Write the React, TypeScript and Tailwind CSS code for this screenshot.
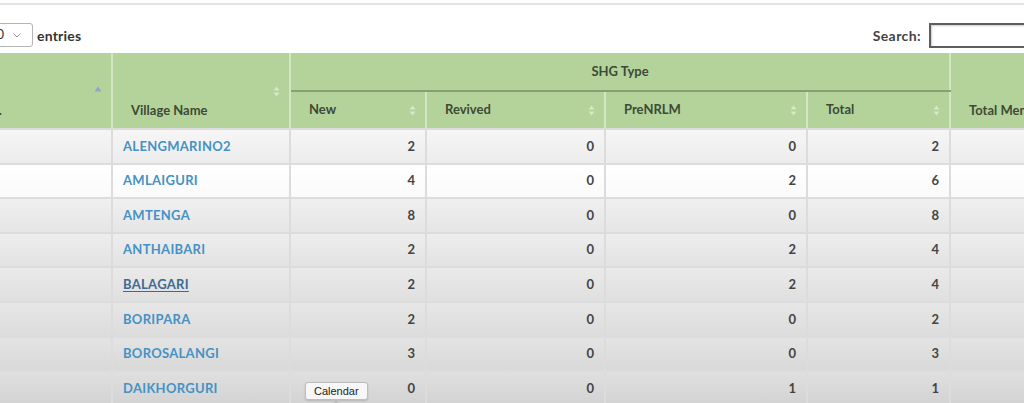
import React from "react";

type Row = {
  village: string;
  nw: number;
  revived: number;
  pre: number;
  total: number;
  bg: string;
  active?: boolean;
};

const rows: Row[] = [
  { village: "ALENGMARINO2", nw: 2, revived: 0, pre: 0, total: 2, bg: "bg-gradient-to-b from-[#f6f6f6] to-[#ececec]" },
  { village: "AMLAIGURI", nw: 4, revived: 0, pre: 2, total: 6, bg: "bg-gradient-to-b from-[#ffffff] to-[#fafafa]" },
  { village: "AMTENGA", nw: 8, revived: 0, pre: 0, total: 8, bg: "bg-gradient-to-b from-[#f0f0f0] to-[#e5e5e5]" },
  { village: "ANTHAIBARI", nw: 2, revived: 0, pre: 2, total: 4, bg: "bg-gradient-to-b from-[#eeeeee] to-[#e2e2e2]" },
  { village: "BALAGARI", nw: 2, revived: 0, pre: 2, total: 4, bg: "bg-gradient-to-b from-[#eaeaea] to-[#dfdfdf]", active: true },
  { village: "BORIPARA", nw: 2, revived: 0, pre: 0, total: 2, bg: "bg-gradient-to-b from-[#e7e7e7] to-[#dcdcdc]" },
  { village: "BOROSALANGI", nw: 3, revived: 0, pre: 0, total: 3, bg: "bg-gradient-to-b from-[#e4e4e4] to-[#d8d8d8]" },
  { village: "DAIKHORGURI", nw: 0, revived: 0, pre: 1, total: 1, bg: "bg-gradient-to-b from-[#e0e0e0] to-[#d2d2d2]" },
];

const SortBoth = () => (
  <svg width="7" height="11" viewBox="0 0 7 11" className="opacity-70">
    <path d="M3.5 0.5 L6.5 4.5 H0.5 Z" fill="#e6f0dc" />
    <path d="M3.5 10.5 L6.5 6.5 H0.5 Z" fill="#e6f0dc" />
  </svg>
);

const SortAsc = () => (
  <svg width="8" height="6" viewBox="0 0 8 6">
    <path d="M4 0.5 L7.5 5.5 H0.5 Z" fill="#8fa3cf" />
  </svg>
);

const HeadCell: React.FC<{ label: string; tall?: boolean; asc?: boolean; pl?: string; first?: boolean }> = ({
  label,
  tall,
  asc,
  pl = "pl-[18px]",
  first,
}) => (
  <th
    rowSpan={tall ? 2 : undefined}
    className={`relative ${pl} pr-[18px] text-left font-bold text-[13px] text-[#3e4a36] whitespace-nowrap border-x-2 border-[#d3e6c4] ${
      tall ? "align-bottom pb-[8px]" : "align-middle"
    } ${first ? "border-l-0" : ""}`}
  >
    {label}
    <span className={`absolute right-[9px] ${tall ? "top-[33px]" : "top-[13px]"}`}>
      {asc ? <SortAsc /> : <SortBoth />}
    </span>
  </th>
);

const App: React.FC = () => {
  return (
    <div className="w-[1024px] h-[403px] overflow-hidden bg-white font-['Lato','Open_Sans',sans-serif]">
      <div className="mt-[3px] h-[2px] bg-[#e4e4e4]" />

      <div className="flex items-center h-[48px] pt-[18px] pb-[6px]">
        <div className="-ml-[26px] flex items-center gap-[9px] h-[24px] w-[59px] border border-[#b5b5b5] rounded-[3px] pl-[14px] text-[13px] text-[#333]">
          <span>10</span>
          <svg width="8" height="5" viewBox="0 0 8 5">
            <path d="M0.5 0.5 L4 4 L7.5 0.5" fill="none" stroke="#9a9a9a" strokeWidth="1" />
          </svg>
        </div>
        <span className="ml-[4px] text-[14px] font-bold text-[#333] tracking-[0.2px]">entries</span>

        <span className="ml-auto text-[14px] font-bold text-[#444] tracking-[0.4px]">Search:</span>
        <div className="ml-[8px] -mr-[40px] w-[135px] h-[25px] border-2 border-[#5e5e5e] bg-white shadow-[inset_1px_1px_2px_rgba(0,0,0,0.2)]" />
      </div>

      <table className="-ml-[60px] table-fixed border-collapse w-[1160px]">
        <colgroup>
          <col className="w-[172px]" />
          <col className="w-[178px]" />
          <col className="w-[136px]" />
          <col className="w-[179px]" />
          <col className="w-[202px]" />
          <col className="w-[143px]" />
          <col className="w-[150px]" />
        </colgroup>
        <thead className="bg-[#b4d39b]">
          <tr className="h-[38px]">
            <HeadCell label="Sl.No." tall asc first pl="pl-[28px]" />
            <HeadCell label="Village Name" tall />
            <th
              colSpan={4}
              className="text-center font-bold text-[13px] text-[#3e4a36] border-x-2 border-[#d3e6c4] border-b-2 border-b-[#86a074]"
            >
              SHG Type
            </th>
            <th
              rowSpan={2}
              className="px-[18px] text-left align-bottom pb-[8px] font-bold text-[13px] text-[#3e4a36] whitespace-nowrap border-x-2 border-[#d3e6c4]"
            >
              Total Members
            </th>
          </tr>
          <tr className="h-[38px] border-b-2 border-[#8f9c86]">
            <HeadCell label="New" />
            <HeadCell label="Revived" />
            <HeadCell label="PreNRLM" />
            <HeadCell label="Total" />
          </tr>
        </thead>
        <tbody className="text-[13px] font-bold">
          {rows.map((r) => (
            <tr key={r.village} className={`h-[34.6px] ${r.bg}`}>
              <td className="border-2 border-l-0 border-[#dcdcdc]" />
              <td className="px-[10px] border-2 border-[#dcdcdc] tracking-[0.3px]">
                <span
                  className={
                    r.active
                      ? "text-[#3c6a92] underline underline-offset-2 decoration-[#3c6a92]"
                      : "text-[#4592c4]"
                  }
                >
                  {r.village}
                </span>
              </td>
              <td className="relative px-[10px] text-right text-[#444] border-2 border-[#dcdcdc]">
                {r.village === "DAIKHORGURI" && (
                  <span className="absolute left-[14px] top-[10px] flex flex-col items-center">
                    <span className="px-[8px] h-[18px] leading-[16px] bg-[#f7f7f7] border border-[#bdbdbd] rounded-[3px] text-[11px] font-normal text-[#222] font-['Liberation_Sans',Arial,sans-serif] shadow-[0_1px_2px_rgba(0,0,0,0.15)]">
                      Calendar
                    </span>
                    <span className="-mt-[1px] w-0 h-0 border-x-[5px] border-x-transparent border-t-[5px] border-t-[#bdbdbd]" />
                  </span>
                )}
                {r.nw}
              </td>
              <td className="px-[10px] text-right text-[#444] border-2 border-[#dcdcdc]">{r.revived}</td>
              <td className="px-[10px] text-right text-[#444] border-2 border-[#dcdcdc]">{r.pre}</td>
              <td className="px-[10px] text-right text-[#444] border-2 border-[#dcdcdc]">{r.total}</td>
              <td className="border-2 border-[#dcdcdc]" />
            </tr>
          ))}
        </tbody>
      </table>
    </div>
  );
};

export default App;
